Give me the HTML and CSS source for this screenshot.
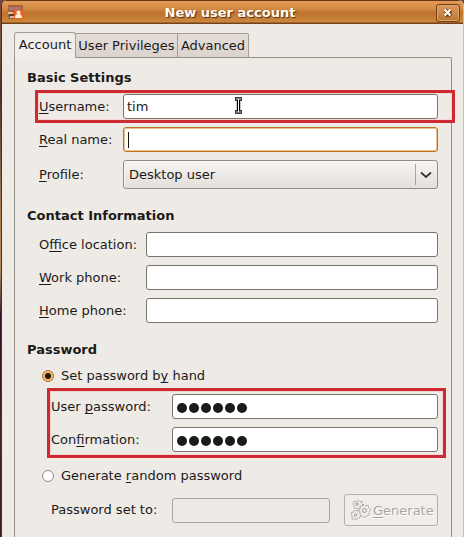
FILE: index.html
```html
<!DOCTYPE html>
<html lang="en">
<head>
<meta charset="utf-8">
<title>New user account</title>
<link rel="stylesheet" href="styles.css">
</head>
<body>
<div class="window">
  <header class="titlebar">
    <svg class="app-icon" width="16" height="15" viewBox="0 0 16 15"><rect width="15" height="14" fill="#a8603a"/><path d="M1 2h12v3H1z" fill="#ac7467"/><path d="M0 7h5v2H0z" fill="#e5c49c"/><path d="M1 9h5v2H1z" fill="#59402c"/><path d="M2 11h4v2H2z" fill="#c5bba8"/><rect x="6" y="5" width="9" height="9" fill="#ee6220"/><circle cx="10.5" cy="7.5" r="2" fill="#fff4e4"/><path d="M7 13q0-4 3.500-4t3.500 4z" fill="#fff0df"/></svg>
    <h1><span class="fit" id="title">New user account</span></h1>
    <button class="close" aria-label="Close"><svg width="10" height="10" viewBox="0 0 10 10"><path d="M2 2l6 6M8 2l-6 6" stroke="#684020" stroke-width="4"/><path d="M1.500 1.500l6 6M7.500 1.500l-6 6" stroke="#fff9e9" stroke-width="2.300"/></svg></button>
  </header>
  <nav class="tabs"><span class="tab active">Account</span><span class="tab privileges">User Privileges</span><span class="tab advanced">Advanced</span></nav>
  <main class="panel">
    <h2 class="basic">Basic Settings</h2>
    <div class="row username"><label><u>U</u>sername:</label><div class="entry">tim</div><i class="highlight"></i>
      <svg class="pointer" width="9" height="17" viewBox="0 0 9 17"><path d="M1 2h3.500v13H1M8 2H4.500M4.500 15H8" fill="none" stroke="#000" stroke-width="3.400"/><path d="M1.500 2h6M1.500 15h6M4.500 2v13" fill="none" stroke="#fff" stroke-width="1"/></svg></div>
    <div class="row"><label><u>R</u>eal name:</label><div class="entry focused"><i class="caret"></i></div></div>
    <div class="row profile"><label><u>P</u>rofile:</label><div class="select"><span>Desktop user</span><span class="arrow"><svg width="12" height="8" viewBox="0 0 12 8"><path d="M1 1.500l5 4.500 5-4.500" fill="none" stroke="#39362f" stroke-width="1.800"/></svg></span></div></div>
    <h2 class="contact">Contact Information</h2>
    <div class="row wide"><label>O<u>ffi</u>ce location:</label><div class="entry"></div></div>
    <div class="row wide"><label><u>W</u>ork phone:</label><div class="entry"></div></div>
    <div class="row wide"><label><u>H</u>ome phone:</label><div class="entry"></div></div>
    <h2 class="pass">Password</h2>
    <div class="choice"><i class="radio checked"></i><label>Set password b<u>y</u> hand</label></div>
    <div class="passwords">
      <div class="row secret"><label>User <u>p</u>assword:</label><div class="entry dots"><b></b><b></b><b></b><b></b><b></b><b></b></div></div>
      <div class="row secret"><label>Con<u>fi</u>rmation:</label><div class="entry dots"><b></b><b></b><b></b><b></b><b></b><b></b></div></div>
      <i class="highlight"></i>
    </div>
    <div class="choice random"><i class="radio"></i><label>Generate <u>r</u>andom password</label></div>
    <div class="row secret generated"><label>Password set to:</label><div class="entry disabled"></div><button class="generate"><svg width="22" height="22" viewBox="0 0 22 22"><g fill="#eeebe7" stroke="#aaa69f" stroke-width="1" stroke-dasharray="2 .6"><path d="M4 2l2 1 2-2 2 2 2-1v3l1 1-1 2v2H9L7 9l-2 1-1-3-1-1z"/><path d="M13 5l2 2 3-1 1 3 2 2-2 2v3l-3 1-2 2-2-2-3 0v-3l-2-2 3-2v-3h3z"/><path d="M2 13l2 0 1-2 3 1 2 0v3l1 2-2 2-2 1-2 0-3 0v-3l-1-2z"/></g><g fill="#eeebe7" stroke="#a09c95"><circle cx="7" cy="5" r="1.200"/><circle cx="14.500" cy="11.500" r="2"/><circle cx="5.500" cy="16" r="1.200"/></g></svg><span><u>G</u>enerate</span></button></div>
  </main>
</div>
</body>
</html>
```
FILE: styles.css
```css
* { box-sizing: border-box; }
body { margin: 0; width: 464px; height: 537px; overflow: hidden; background: linear-gradient(#744437, #80533d 8%, #453026 17%, #b28258 40%, #b78b62 50%, #341625 59%, #452425 80%, #3c2022); font: 13px "DejaVu Sans", sans-serif; color: #1c1a18; }
h1, h2, button { font: inherit; margin: 0; padding: 0; }
u { text-decoration: underline; text-decoration-thickness: 1px; text-underline-offset: 2px; text-decoration-skip-ink: none; }
.window { margin-left: 1px; height: 537px; border-left: 1px solid #423328; border-right: 1px solid #d7b7a1; background: #eeebe7; border-radius: 6px 6px 0 0; overflow: hidden; }
.titlebar { height: 24px; display: flex; align-items: center; background: linear-gradient(#653514 0 1px, #e49a57 1px, #d48c46 8px, #bd732d 13px, #ce873e 22px, #75421b 23px); padding: 1px 3px 0 6px; }
.titlebar h1 { flex: 1; text-align: center; font-weight: bold; color: #fffbf1; text-shadow: 1px 1px 1px #552e10; line-height: 22px; }
.close { width: 24px; height: 18px; border: 1px solid #724018; border-radius: 3px; background: linear-gradient(#dc9a5c, #bd7731); box-shadow: inset 0 0 0 1px #dda56b; display: flex; align-items: center; justify-content: center; }
.tabs { display: flex; align-items: flex-end; height: 33px; margin-left: 12px; }
.tab { height: 24px; line-height: 23px; border: 1px solid #a59d95; border-left: 0; border-bottom: 0; background: linear-gradient(#e3dcd7, #dcd3ce); white-space: nowrap; text-align: center; }
.tab.active { width: 62px; height: 26px; border-left: 1px solid #a59d95; border-radius: 3px 3px 0 0; background: #f1eeea; position: relative; margin-bottom: -1px; line-height: 24px; }
.privileges { width: 102px; }
.advanced { width: 71px; border-radius: 0 2px 0 0; }
.panel { margin-left: 12px; width: 438px; height: 481px; border: 1px solid #958e85; border-bottom: 0; border-radius: 0 2px 0 0; padding-left: 12px; }
h2 { font-weight: bold; line-height: 18px; height: 18px; }
.basic { margin: 11px 0 7px; }
.row { display: grid; grid-template-columns: 84px 315px; height: 25px; margin: 0 0 8px 12px; position: relative; align-items: center; }
.wide { grid-template-columns: 107px 292px; }
.row label, .choice label { white-space: nowrap; line-height: 20px; }
.entry { height: 25px; border: 1px solid #79736c; border-radius: 3px; background: #fff; line-height: 23px; padding-left: 3px; }
.focused { border: 1px solid #b97622; box-shadow: inset 0 0 0 1px #ecc18b; padding: 4px 0 0 4px; }
.caret { display: block; width: 1px; height: 16px; background: #111; }
.highlight { position: absolute; border: 3px solid #cd2a33; box-shadow: inset 0 0 0 1px #f5d3d2; inset: -4px -4px -4px -4px; pointer-events: none; }
.pointer { position: absolute; left: 195px; top: 3px; }
.profile { height: 29px; }
.select { height: 29px; border: 1px solid #948d86; border-radius: 3px; background: linear-gradient(#f6f4f2, #e4dfda); display: flex; align-items: center; justify-content: space-between; padding-left: 5px; box-shadow: inset 1px 1px #faf9f8; }
.arrow { width: 22px; height: 21px; border-left: 1px solid #aaa49c; display: flex; align-items: center; justify-content: center; padding-right: 2px; }
.contact { margin: 18px 0 7px; }
.pass { margin: 18px 0 7px; }
.choice { display: flex; align-items: center; gap: 7px; height: 20px; margin-left: 15px; }
.radio { width: 12px; height: 12px; border: 1px solid #918a81; border-radius: 50%; background: #fff; }
.checked { border-color: #a87135; background: radial-gradient(circle, #211b13 0 2.6px, #f6ba68 3.4px); }
.passwords { margin-top: 8px; position: relative; width: 412px; }
.passwords .highlight { inset: -6px -7px -6px 20px; }
.secret { grid-template-columns: 121px 266px; margin-left: 24px; }
.dots { display: flex; align-items: center; gap: 2px; padding: 3px 0 0 4px; }
.dots b { width: 10px; height: 10px; border-radius: 50%; background: #1d1a1b; }
.random { margin-top: 14px; }
.generated { grid-template-columns: 121px 158px 94px; column-gap: 0; height: 32px; margin-top: 8px; }
.generated .generate { margin-left: 14px; width: 94px; }
.disabled { border-color: #aaa49c; background: #eeebe7; }
.generate { height: 32px; border: 1px solid #b5afa8; border-radius: 3px; background: #f0edea; color: #aaa59e; display: flex; align-items: center; padding-left: 5px; gap: 1px; text-shadow: 1px 1px #fff; }
```
